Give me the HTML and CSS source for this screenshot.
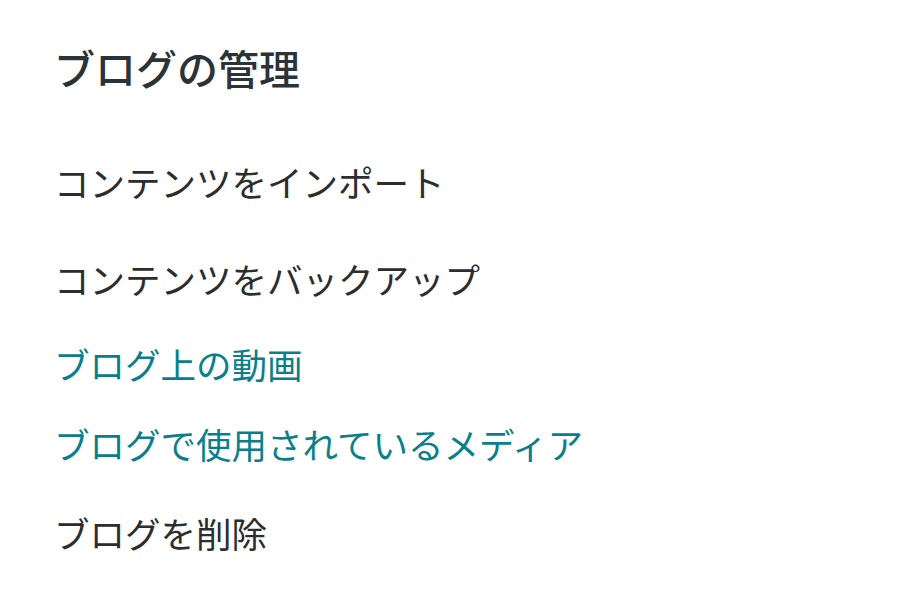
FILE: index.html
```html
<!DOCTYPE html>
<html lang="ja">
<head>
<meta charset="utf-8">
<link rel="stylesheet" href="styles.css">
</head>
<body>
<main class="panel">
  <h1 class="title">ブログの管理</h1>
  <ul class="menu">
    <li class="item item-import">コンテンツをインポート</li>
    <li class="item item-backup">コンテンツをバックアップ</li>
    <li class="item link item-videos">ブログ上の動画</li>
    <li class="item link item-media">ブログで使用されているメディア</li>
    <li class="item item-delete">ブログを削除</li>
  </ul>
</main>
</body>
</html>
```

FILE: styles.css
```css
html, body {
  margin: 0;
  padding: 0;
  background: #ffffff;
}
body {
  font-family: "Noto Sans CJK JP", "Noto Sans", sans-serif;
}
.panel {
  padding: 37px 0 0 54px;
}
.title {
  margin: 0;
  font-size: 41px;
  line-height: 60px;
  font-weight: 500;
  color: #2c3338;
}
.menu {
  list-style: none;
  margin: 0;
  padding: 0;
}
.item {
  font-size: 35.5px;
  line-height: 50px;
  color: #2b2d2f;
}
.item-import { margin-top: 60px; }
.item-backup { margin-top: 47px; }
.item-videos { margin-top: 35px; }
.item-media { margin-top: 30px; }
.item-delete { margin-top: 39px; }
.link {
  color: #0a7f8b;
}
```
